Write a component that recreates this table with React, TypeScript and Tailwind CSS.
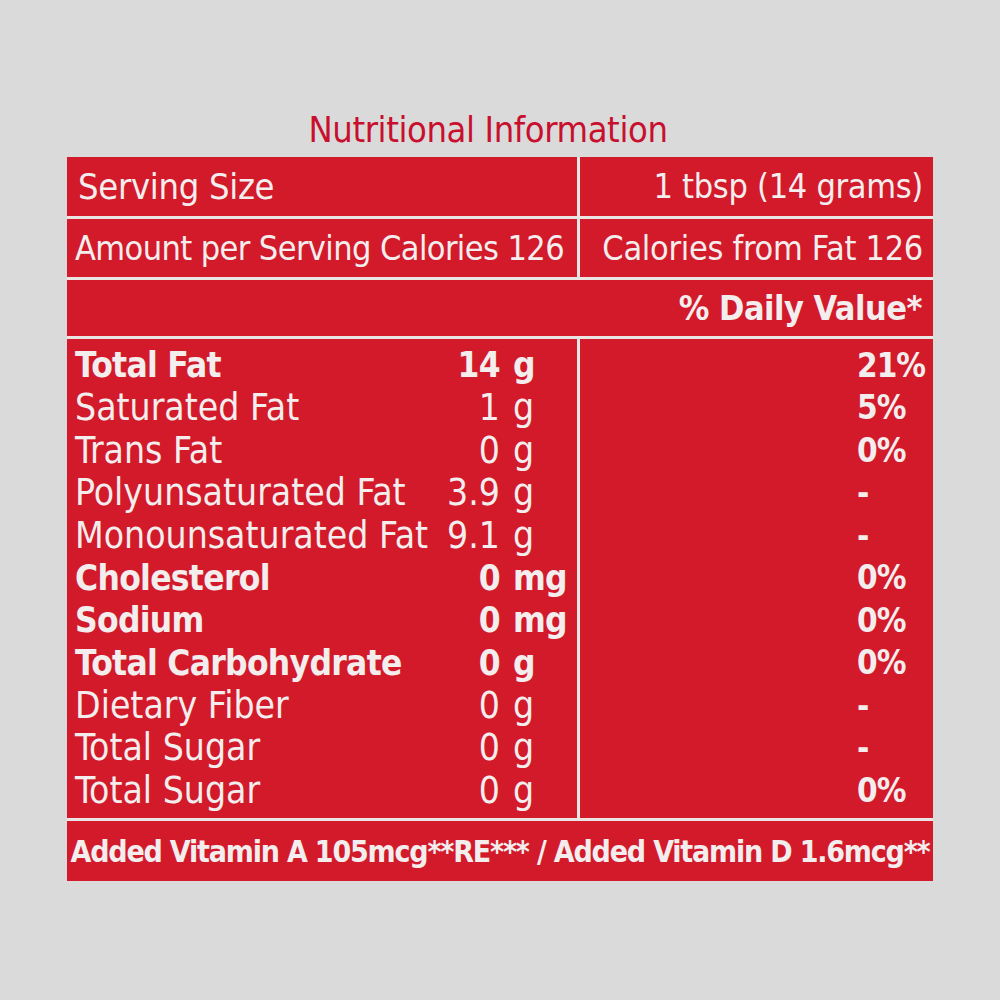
import React from 'react';

const rows = [
  { name: 'Total Fat', amt: '14', unit: 'g', dv: '21%', bold: true },
  { name: 'Saturated Fat', amt: '1', unit: 'g', dv: '5%' },
  { name: 'Trans Fat', amt: '0', unit: 'g', dv: '0%' },
  { name: 'Polyunsaturated Fat', amt: '3.9', unit: 'g', dv: '-' },
  { name: 'Monounsaturated Fat', amt: '9.1', unit: 'g', dv: '-' },
  { name: 'Cholesterol', amt: '0', unit: 'mg', dv: '0%', bold: true },
  { name: 'Sodium', amt: '0', unit: 'mg', dv: '0%', bold: true },
  { name: 'Total Carbohydrate', amt: '0', unit: 'g', dv: '0%', bold: true },
  { name: 'Dietary Fiber', amt: '0', unit: 'g', dv: '-' },
  { name: 'Total Sugar', amt: '0', unit: 'g', dv: '-' },
  { name: 'Total Sugar', amt: '0', unit: 'g', dv: '0%' },
];

export default function App() {
  return (
    <div className="w-full h-[1000px] bg-[#dadada] flex flex-col items-center font-['DejaVu_Sans_Condensed','DejaVu_Sans',sans-serif] font-stretch-condensed text-[#f3eded]">
      <h1 className="mt-[107px] mr-[24px] text-[36px] leading-[46px] text-[#c8102e] tracking-[-0.4px]">
        Nutritional Information
      </h1>

      {/* table: light gaps between red cells form the rules */}
      <div className="mt-[4px] w-[866px] bg-[#ebe4e4] flex flex-col gap-[3px] text-[34px] tracking-[-0.3px]">
        <div className="grid grid-cols-[510px_1fr] gap-[3px] h-[59px]">
          <div className="bg-[#d21a2b] flex items-center pl-[11px] text-[36px]">Serving Size</div>
          <div className="bg-[#d21a2b] flex items-center justify-end pr-[10px]">1 tbsp (14 grams)</div>
        </div>
        <div className="grid grid-cols-[510px_1fr] gap-[3px] h-[58px]">
          <div className="bg-[#d21a2b] flex items-center pl-[8px] tracking-[-0.6px]">Amount per Serving Calories 126</div>
          <div className="bg-[#d21a2b] flex items-center justify-end pr-[10px]">Calories from Fat 126</div>
        </div>
        <div className="bg-[#d21a2b] h-[56px] flex items-center justify-end pr-[11px] font-bold tracking-[-0.5px]">
          % Daily Value*
        </div>
        <div className="grid grid-cols-[510px_1fr] gap-[3px] h-[479px] text-[37px] tracking-[0px]">
          <div className="bg-[#d21a2b] pt-[5px] pl-[8px] flex flex-col">
            {rows.map((r, i) => (
              <div key={i} className={`flex h-[42.5px] items-center ${r.bold ? 'font-bold text-[35px] tracking-[-0.7px]' : ''}`}>
                <span className="flex-1 whitespace-nowrap">{r.name}</span>
                <span className="text-right">{r.amt}</span>
                <span className="w-[77px] pl-[13px]">{r.unit}</span>
              </div>
            ))}
          </div>
          <div className="bg-[#d21a2b] pt-[5px] pl-[277px] flex flex-col font-bold text-[33px] tracking-[-1px]">
            {rows.map((r, i) => (
              <div key={i} className="h-[42.5px] flex items-center">
                {r.dv}
              </div>
            ))}
          </div>
        </div>
        <div className="bg-[#d21a2b] h-[60px] flex items-center justify-center overflow-hidden whitespace-nowrap font-bold text-[30px] tracking-[-1.2px]">
          Added Vitamin A 105mcg**RE*** / Added Vitamin D 1.6mcg**
        </div>
      </div>
    </div>
  );
}
